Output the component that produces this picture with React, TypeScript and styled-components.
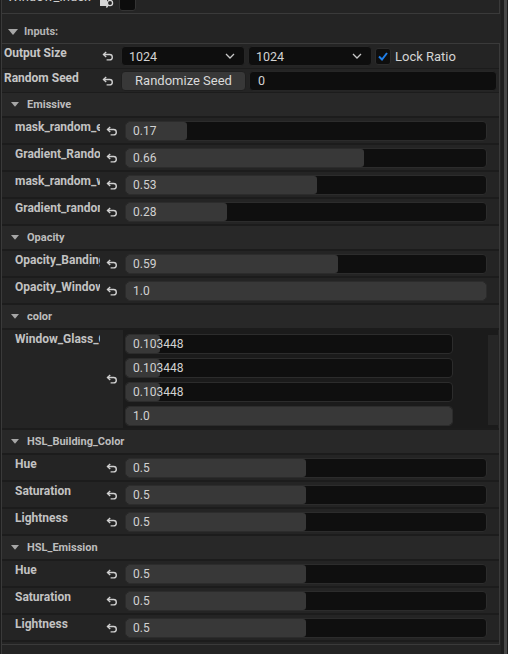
import React from 'react';
import styled, { createGlobalStyle } from 'styled-components';

const GlobalStyle = createGlobalStyle`
  html, body {
    margin: 0;
    padding: 0;
    background: #1d1d1d;
  }
  body {
    font-family: Roboto, "Liberation Sans", sans-serif;
  }
`;

const Screen = styled.div`
  display: flex;
  width: 508px;
  height: 654px;
  overflow: hidden;
  background: #1d1d1d;
`;

const Panel = styled.div`
  width: 499px;
  margin-left: 1px;
  border-left: 1px solid #3a3a3a;
  background: #242424;
  display: flex;
  flex-direction: column;
`;

const Gutter = styled.div`
  width: 7px;
  padding-left: 3px;
  box-sizing: border-box;
  display: flex;
`;

const Thumb = styled.div`
  width: 3px;
  background: #464646;
`;

const TopBox = styled.div`
  width: 498px;
  height: 14px;
  box-sizing: border-box;
  border-right: 1px solid #3a3a3a;
  border-bottom: 1px solid #3a3a3a;
  display: flex;
  align-items: flex-start;
  overflow: hidden;
`;

const ClippedName = styled.span`
  width: 93px;
  margin-top: -11px;
  padding-left: 5px;
  font-size: 13px;
  line-height: 16px;
  color: #cfcfcf;
  white-space: nowrap;
  overflow: hidden;
`;

const Swatch = styled.div`
  width: 15px;
  height: 12px;
  margin-top: -3px;
  margin-left: 5px;
  border: 1px solid #333;
  border-radius: 3px;
  background: #0c0c0c;
`;

const InputsHeader = styled.div`
  height: 29px;
  box-sizing: border-box;
  padding: 6px 0 0 6px;
  display: flex;
  align-items: center;
  gap: 6px;
  font-size: 11px;
  font-weight: 700;
  color: #b4b4b4;
`;

const Box = styled.div`
  width: 498px;
  box-sizing: border-box;
  border-top: 1px solid #3a3a3a;
  border-right: 1px solid #3a3a3a;
  border-bottom: 1px solid #3a3a3a;
  display: flex;
  flex-direction: column;
  padding-bottom: 2px;
`;

const TopRow = styled.div<{ h: number }>`
  height: ${p => p.h}px;
  box-sizing: border-box;
  display: grid;
  grid-template-columns: 95px 22px 1fr;
  align-items: center;
  padding-right: 2px;
  border-bottom: 1px solid #1c1c1c;
`;

const TopLabel = styled.div`
  align-self: start;
  padding: 2px 0 0 2px;
  font-size: 12px;
  line-height: 14px;
  font-weight: 700;
  color: #c6c6c6;
  white-space: nowrap;
`;

const IconCell = styled.div`
  display: flex;
  justify-content: center;
  align-items: center;
`;

const ValueRow = styled.div`
  display: flex;
  align-items: center;
  gap: 3px;
  padding-left: 2px;
`;

const Combo = styled.div`
  width: 124px;
  height: 20px;
  box-sizing: border-box;
  border: 1px solid #262626;
  border-radius: 4px;
  background: #0e0e0e;
  display: flex;
  align-items: center;
  justify-content: space-between;
  padding: 0 9px 0 7px;
  font-size: 12.5px;
  color: #d2d2d2;
`;

const CheckBox = styled.div`
  width: 16px;
  height: 17px;
  box-sizing: border-box;
  border: 1px solid #2c2c2c;
  border-radius: 3px;
  background: #0e0e0e;
  display: flex;
  align-items: center;
  justify-content: center;
`;

const CheckText = styled.span`
  margin-left: 1px;
  font-size: 13px;
  color: #d4d4d4;
`;

const Button = styled.div`
  width: 125px;
  height: 20px;
  box-sizing: border-box;
  border: 1px solid #1f1f1f;
  border-radius: 4px;
  background: #383838;
  display: flex;
  align-items: center;
  justify-content: center;
  font-size: 13px;
  color: #dadada;
`;

const TextInput = styled.div`
  flex: 1;
  height: 20px;
  box-sizing: border-box;
  border: 1px solid #262626;
  border-radius: 4px;
  background: #0e0e0e;
  display: flex;
  align-items: center;
  padding-left: 8px;
  font-size: 12.5px;
  color: #d2d2d2;
`;

const CategoryHeader = styled.div`
  height: 25px;
  box-sizing: border-box;
  background: #282828;
  border-bottom: 2px solid #1c1c1c;
  display: flex;
  align-items: center;
  gap: 8px;
  padding-left: 9px;
  font-size: 11px;
  font-weight: 700;
  color: #bdbdbd;
`;

const SubRow = styled.div<{ h?: number; tight?: boolean }>`
  height: ${p => p.h ?? 27}px;
  box-sizing: border-box;
  display: grid;
  grid-template-columns: 98px 23px 1fr;
  align-items: center;
  padding-right: ${p => (p.tight ? 1 : 12)}px;
  border-bottom: 2px solid #1c1c1c;
`;

const SubLabel = styled.div`
  align-self: start;
  padding: 2px 0 0 13px;
  font-size: 12px;
  line-height: 14px;
  font-weight: 700;
  color: #c2c2c2;
  white-space: nowrap;
  overflow: hidden;
`;

const Field = styled.div<{ w?: number }>`
  position: relative;
  width: ${p => (p.w ? `${p.w}px` : 'auto')};
  margin-left: ${p => (p.w ? 0 : 2)}px;
  height: 20px;
  box-sizing: border-box;
  border: 1px solid #2c2c2c;
  border-radius: 4px;
  background: #0f0f0f;
  overflow: hidden;
`;

const Fill = styled.div`
  position: absolute;
  left: 0;
  top: 0;
  bottom: 0;
  background: #383838;
  border-radius: 3px;
`;

const FieldText = styled.span`
  position: relative;
  display: block;
  padding-left: 7px;
  font-size: 12px;
  line-height: 18px;
  color: #d2d2d2;
`;

const Nested = styled.div`
  align-self: stretch;
  display: flex;
  background: #1b1b1b;
  padding: 4px 0 2px 2px;
`;

const FieldStack = styled.div`
  display: flex;
  flex-direction: column;
  gap: 4px;
  width: 328px;
`;

const NestedBar = styled.div`
  width: 10px;
  margin: 1px 0 1px auto;
  background: #262626;
`;

const ResetIcon = () => (
  <svg width="12" height="10" viewBox="0 0 12 10" fill="none" stroke="#d0d0d0" strokeWidth="1.4">
    <path d="M4.2 0.9 L1.5 3.5 L4.2 6.1" />
    <path d="M1.6 3.5 H7.6 A2.7 2.7 0 0 1 7.6 8.9 H4.6" />
  </svg>
);

const Chevron = () => (
  <svg width="10" height="6" viewBox="0 0 10 6" fill="none" stroke="#c8c8c8" strokeWidth="1.3">
    <polyline points="1,1 5,5 9,1" />
  </svg>
);

const Check = () => (
  <svg width="10" height="9" viewBox="0 0 10 9" fill="none" stroke="#1f7ee8" strokeWidth="2">
    <polyline points="1,4.5 4,7.5 9,1" />
  </svg>
);

const Arrow = ({ size }: { size: number }) => (
  <svg width={size} height={size * 0.6} viewBox="0 0 10 6">
    <polygon points="0,0 10,0 5,6" fill="#a6a6a6" />
  </svg>
);

const BrowseIcon = () => (
  <svg width="14" height="12" viewBox="0 0 14 12" style={{ marginTop: -3 }}>
    <rect x="0" y="0" width="7" height="9" fill="#d6d6d6" />
    <circle cx="10" cy="6" r="2.6" fill="none" stroke="#d6d6d6" strokeWidth="1.3" />
    <line x1="8.2" y1="8" x2="6.4" y2="10.5" stroke="#d6d6d6" strokeWidth="1.4" />
  </svg>
);

type Prop = { label: string; value: number; text: string };

const Slider = ({ value, text, w }: { value: number; text: string; w?: number }) => (
  <Field w={w}>
    <Fill style={{ width: `${value * 100}%` }} />
    <FieldText>{text}</FieldText>
  </Field>
);

const ScalarRow = ({ label, value, text }: Prop) => (
  <SubRow>
    <SubLabel>{label}</SubLabel>
    <IconCell>
      <ResetIcon />
    </IconCell>
    <Slider value={value} text={text} />
  </SubRow>
);

const Category = ({ name, props }: { name: string; props: Prop[] }) => (
  <>
    <CategoryHeader>
      <Arrow size={8} />
      {name}
    </CategoryHeader>
    {props.map(p => (
      <ScalarRow key={p.label} {...p} />
    ))}
  </>
);

const emissive: Prop[] = [
  { label: 'mask_random_emissive', value: 0.17, text: '0.17' },
  { label: 'Gradient_Random_Emissive', value: 0.66, text: '0.66' },
  { label: 'mask_random_windows', value: 0.53, text: '0.53' },
  { label: 'Gradient_random_windows', value: 0.28, text: '0.28' },
];

const opacity: Prop[] = [
  { label: 'Opacity_Banding', value: 0.59, text: '0.59' },
  { label: 'Opacity_Window', value: 1, text: '1.0' },
];

const hsl = (): Prop[] => [
  { label: 'Hue', value: 0.5, text: '0.5' },
  { label: 'Saturation', value: 0.5, text: '0.5' },
  { label: 'Lightness', value: 0.5, text: '0.5' },
];

const glass = [0.103448, 0.103448, 0.103448, 1];

export default function App() {
  return (
    <>
      <GlobalStyle />
      <Screen>
        <Panel>
          <TopBox>
            <ClippedName>Window_Index</ClippedName>
            <BrowseIcon />
            <Swatch />
          </TopBox>

          <InputsHeader>
            <Arrow size={10} />
            Inputs:
          </InputsHeader>

          <Box>
            <TopRow h={25}>
              <TopLabel>Output Size</TopLabel>
              <IconCell>
                <ResetIcon />
              </IconCell>
              <ValueRow>
                <Combo>
                  1024
                  <Chevron />
                </Combo>
                <Combo>
                  1024
                  <Chevron />
                </Combo>
                <CheckBox>
                  <Check />
                </CheckBox>
                <CheckText>Lock Ratio</CheckText>
              </ValueRow>
            </TopRow>
            <TopRow h={24}>
              <TopLabel>Random Seed</TopLabel>
              <IconCell>
                <ResetIcon />
              </IconCell>
              <ValueRow>
                <Button>Randomize Seed</Button>
                <TextInput>0</TextInput>
              </ValueRow>
            </TopRow>

            <Category name="Emissive" props={emissive} />
            <Category name="Opacity" props={opacity} />

            <CategoryHeader>
              <Arrow size={8} />
              color
            </CategoryHeader>
            <SubRow h={100} tight>
              <SubLabel>Window_Glass_Color</SubLabel>
              <IconCell>
                <ResetIcon />
              </IconCell>
              <Nested>
                <FieldStack>
                  {glass.map((v, i) => (
                    <Slider key={i} value={v} text={v === 1 ? '1.0' : String(v)} w={328} />
                  ))}
                </FieldStack>
                <NestedBar />
              </Nested>
            </SubRow>

            <Category name="HSL_Building_Color" props={hsl()} />
            <Category name="HSL_Emission" props={hsl()} />
          </Box>
        </Panel>
        <Gutter>
          <Thumb />
        </Gutter>
      </Screen>
    </>
  );
}
